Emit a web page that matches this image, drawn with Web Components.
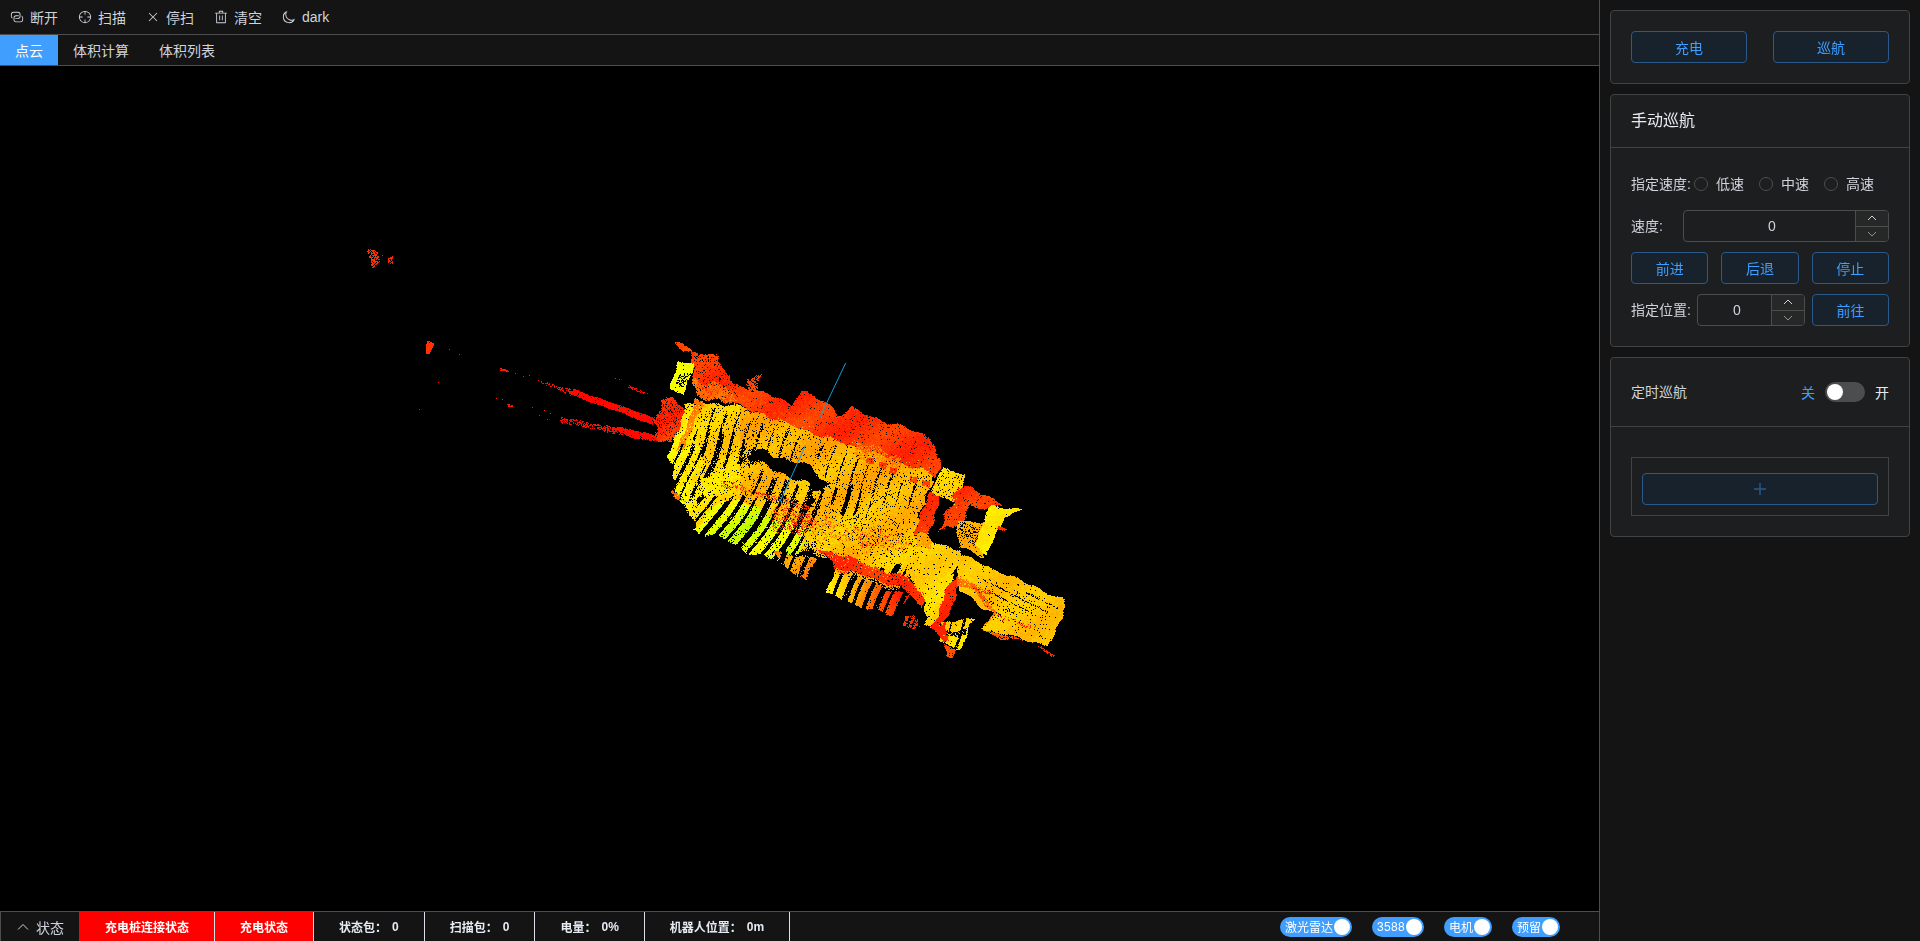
<!DOCTYPE html>
<html lang="zh">
<head>
<meta charset="utf-8">
<title>点云</title>
<style>
    html, body {
        margin: 0;
        height: 100%;
        background: #141414;
        overflow: hidden;
        font-family: "Liberation Sans", "Noto Sans CJK SC", sans-serif;
        font-size: 14px;
        color: #cfd3dc;
    }
</style>
</head>
<body>
<app-shell>
    <tool-bar slot="toolbar">
        <tool-item icon="connection">断开</tool-item>
        <tool-item icon="aim">扫描</tool-item>
        <tool-item icon="close">停扫</tool-item>
        <tool-item icon="delete">清空</tool-item>
        <tool-item icon="moon">dark</tool-item>
    </tool-bar>
    <tab-bar slot="tabs">
        <tab-item active>点云</tab-item>
        <tab-item>体积计算</tab-item>
        <tab-item>体积列表</tab-item>
    </tab-bar>
    <point-cloud slot="view"></point-cloud>
    <status-bar slot="status">
        <status-toggle>状态</status-toggle>
        <status-cell alert>充电桩连接状态</status-cell>
        <status-cell alert>充电状态</status-cell>
        <status-cell value="0">状态包：</status-cell>
        <status-cell value="0">扫描包：</status-cell>
        <status-cell value="0%">电量：</status-cell>
        <status-cell value="0m">机器人位置：</status-cell>
        <inline-switch slot="right">激光雷达</inline-switch>
        <inline-switch slot="right" style="letter-spacing:.3px">3588</inline-switch>
        <inline-switch slot="right">电机</inline-switch>
        <inline-switch slot="right">预留</inline-switch>
    </status-bar>

    <panel-card slot="side">
        <div style="display:flex;justify-content:space-between">
            <plain-button style="width:116px">充电</plain-button>
            <plain-button style="width:116px">巡航</plain-button>
        </div>
    </panel-card>

    <panel-card slot="side">
        <span slot="header" style="font-size:16px;line-height:16px;color:#e5eaf3">手动巡航</span>
        <div style="display:flex;flex-direction:column;gap:10px">
            <form-row>
                <span style="width:63px;margin-bottom:2px">指定速度:</span>
                <radio-item>低速</radio-item>
                <radio-item>中速</radio-item>
                <radio-item>高速</radio-item>
            </form-row>
            <form-row>
                <span style="width:52px;margin-bottom:2px">速度:</span>
                <number-input style="flex:1"></number-input>
            </form-row>
            <div style="display:grid;grid-template-columns:repeat(3,1fr);gap:13px">
                <plain-button>前进</plain-button>
                <plain-button>后退</plain-button>
                <plain-button>停止</plain-button>
            </div>
            <form-row>
                <span style="width:66px;margin-bottom:2px">指定位置:</span>
                <number-input style="flex:1"></number-input>
                <plain-button style="width:77px;margin-left:7px">前往</plain-button>
            </form-row>
        </div>
    </panel-card>

    <panel-card slot="side">
        <div slot="header" style="display:flex;align-items:center;justify-content:space-between;height:32px;flex:1">
            <span style="margin-bottom:2px">定时巡航</span>
            <off-switch></off-switch>
        </div>
        <add-box></add-box>
    </panel-card>
</app-shell>

<script>
const ICONS = {
    connection: "M640 384v64H448a128 128 0 0 0-128 128v128a128 128 0 0 0 128 128h320a128 128 0 0 0 128-128V576a128 128 0 0 0-64-110.848V394.88c74.56 26.368 128 97.472 128 181.056v128a192 192 0 0 1-192 192H448a192 192 0 0 1-192-192V576a192 192 0 0 1 192-192h192z M384 640v-64h192a128 128 0 0 0 128-128V320a128 128 0 0 0-128-128H256a128 128 0 0 0-128 128v128a128 128 0 0 0 64 110.848v70.272A192.064 192.064 0 0 1 64 448V320a192 192 0 0 1 192-192h320a192 192 0 0 1 192 192v128a192 192 0 0 1-192 192H384z",
    aim: "M512 896a384 384 0 1 0 0-768 384 384 0 0 0 0 768zm0 64a448 448 0 1 1 0-896 448 448 0 0 1 0 896z M512 96a32 32 0 0 1 32 32v192a32 32 0 0 1-64 0V128a32 32 0 0 1 32-32zm0 576a32 32 0 0 1 32 32v192a32 32 0 1 1-64 0V704a32 32 0 0 1 32-32zM96 512a32 32 0 0 1 32-32h192a32 32 0 0 1 0 64H128a32 32 0 0 1-32-32zm576 0a32 32 0 0 1 32-32h192a32 32 0 1 1 0 64H704a32 32 0 0 1-32-32z",
    close: "M764.288 214.592 512 466.88 259.712 214.592a31.936 31.936 0 0 0-45.12 45.12L466.752 512 214.528 764.224a31.936 31.936 0 1 0 45.12 45.184L512 557.184l252.288 252.288a31.936 31.936 0 0 0 45.12-45.12L557.12 512.064l252.288-252.352a31.936 31.936 0 1 0-45.12-45.184z",
    delete: "M160 256H96a32 32 0 0 1 0-64h256V95.936a32 32 0 0 1 32-32h256a32 32 0 0 1 32 32V192h256a32 32 0 1 1 0 64h-64v672a32 32 0 0 1-32 32H192a32 32 0 0 1-32-32V256zm448-64v-64H416v64h192zM224 896h576V256H224v640zm192-128a32 32 0 0 1-32-32V416a32 32 0 0 1 64 0v320a32 32 0 0 1-32 32zm192 0a32 32 0 0 1-32-32V416a32 32 0 0 1 64 0v320a32 32 0 0 1-32 32z",
    moon: "M240.448 240.448a384 384 0 1 0 559.424 525.696 448 448 0 0 1-542.016-542.08 390.592 390.592 0 0 0-17.408 16.384zm181.056 362.048a384 384 0 0 0 525.632 16.384A448 448 0 1 1 405.056 76.8a384 384 0 0 0 16.448 525.696z",
};

class AppShell extends HTMLElement {
    constructor() {
        super();
        this.attachShadow({ mode: "open" });
    }
    connectedCallback() {
        this.shadowRoot.innerHTML = `
        <style>
            :host { display: flex; width: 100%; height: 100vh; }
            .main { flex: 1; min-width: 0; display: flex; flex-direction: column; border-right: 1px solid #4c4d4f; }
            .view { flex: 1; min-height: 0; display: flex; background: #000; }
            .side { width: 320px; box-sizing: border-box; padding: 10px; display: flex; flex-direction: column; gap: 10px; background: #141414; }
        </style>
        <div class="main">
            <slot name="toolbar"></slot>
            <slot name="tabs"></slot>
            <div class="view"><slot name="view"></slot></div>
            <slot name="status"></slot>
        </div>
        <div class="side"><slot name="side"></slot></div>
    `;
    }
}

class ToolBar extends HTMLElement {
    constructor() {
        super();
        this.attachShadow({ mode: "open" });
    }
    connectedCallback() {
        this.shadowRoot.innerHTML = `
        <style>
            :host { display: flex; align-items: center; gap: 20px; height: 34px; padding-left: 10px; background: #141414; border-bottom: 1px solid #4c4d4f; }
        </style>
        <slot></slot>
    `;
    }
}

class ToolItem extends HTMLElement {
    constructor() {
        super();
        this.attachShadow({ mode: "open" });
    }
    connectedCallback() {
        const d = ICONS[this.getAttribute("icon")];
        this.shadowRoot.innerHTML = `
        <style>
            :host { display: flex; align-items: center; gap: 6px; color: #cfd3dc; font-size: 14px; }
            svg { width: 14px; height: 14px; fill: currentColor; }
        </style>
        <svg viewBox="0 0 1024 1024"><path d="${d}"/></svg>
        <slot></slot>
    `;
    }
}

class TabBar extends HTMLElement {
    constructor() {
        super();
        this.attachShadow({ mode: "open" });
    }
    connectedCallback() {
        this.shadowRoot.innerHTML = `
        <style>
            :host { display: flex; height: 30px; background: #141414; border-bottom: 1px solid #4c4d4f; }
        </style>
        <slot></slot>
    `;
    }
}

class TabItem extends HTMLElement {
    constructor() {
        super();
        this.attachShadow({ mode: "open" });
    }
    connectedCallback() {
        this.shadowRoot.innerHTML = `
        <style>
            :host { display: flex; align-items: center; padding: 0 15px; color: #cfd3dc; }
            :host([active]) { background: #409eff; color: #fff; }
        </style>
        <slot></slot>
    `;
    }
}

// the scan is generated: polygons in crop coordinates, filled with seeded points
class PointCloud extends HTMLElement {
    constructor() {
        super();
        this.attachShadow({ mode: "open" });
        this._seed = 12345;
    }
    connectedCallback() {
        this.shadowRoot.innerHTML = `
        <style>
            :host { display: block; flex: 1; background: #000; }
            canvas { display: block; }
        </style>
        <canvas width="1599" height="845"></canvas>
    `;
        this._paint(this.shadowRoot.querySelector("canvas"));
    }
    _rand() {
        this._seed = (this._seed * 1664525 + 1013904223) % 4294967296;
        return this._seed / 4294967296;
    }
    _paint(canvas) {
        const W = canvas.width, H = canvas.height, OFFSET_Y = 66;
        const ctx = canvas.getContext("2d");
        const img = ctx.createImageData(W, H);
        const px = img.data;
        for (let i = 3; i < px.length; i += 4) px[i] = 255;

        const set = (x, y, r, g, b) => {
            if (x < 0 || y < 0 || x >= W || y >= H) return;
            const i = (y * W + x) * 4;
            px[i] = r; px[i + 1] = g; px[i + 2] = b;
        };
        const hue = h => {
            h = Math.max(0, Math.min(120, h));
            return h <= 60 ? [255, Math.round(h / 60 * 255), 0] : [Math.round((120 - h) / 60 * 255), 255, 0];
        };
        const inside = (poly, x, y) => {
            let hit = false;
            for (let i = 0, j = poly.length - 1; i < poly.length; j = i++) {
                const [xi, yi] = poly[i], [xj, yj] = poly[j];
                if ((yi > y) !== (yj > y) && x < (xj - xi) * (y - yi) / (yj - yi) + xi) hit = !hit;
            }
            return hit;
        };
        // walks the real pixels of a polygon given in 3x crop coordinates
        // the edge wobbles a little so that the shapes do not look cut out
        const walk = (poly, fn, rough = 0) => {
            const xs = poly.map(p => 640 + p[0] / 3), ys = poly.map(p => 320 + p[1] / 3);
            const x0 = Math.floor(Math.min(...xs)) - 4, x1 = Math.ceil(Math.max(...xs)) + 4;
            const y0 = Math.floor(Math.min(...ys)) - 4, y1 = Math.ceil(Math.max(...ys)) + 4;
            for (let y = y0; y <= y1; y++) {
                for (let x = x0; x <= x1; x++) {
                    const zx = (x - 640) * 3, zy = (y - 320) * 3;
                    const dx = rough * (Math.sin(zy / 9) + Math.sin(zy / 23 + zx / 31)) + (this._rand() - 0.5) * rough;
                    const dy = rough * (Math.sin(zx / 11) + Math.sin(zx / 19 - zy / 37)) + (this._rand() - 0.5) * rough;
                    if (inside(poly, zx + dx, zy + dy)) fn(x, y - OFFSET_Y, zx, zy);
                }
            }
        };
        const fill = (poly, h, density = 0.95, spread = 5, rough = 5) => {
            walk(poly, (x, y, zx, zy) => {
                if (this._rand() > density) return;
                const base = typeof h === "function" ? h(zx, zy) : h;
                const wave = Math.sin(zx / 47 + zy / 31) * spread * 0.5;
                set(x, y, ...hue(base + wave + (this._rand() - 0.5) * spread));
            }, rough);
        };
        const carve = (poly, period, width, prob, nx = 0.94, ny = 0.35) => {
            walk(poly, (x, y, zx, zy) => {
                const along = zx * ny - zy * nx;
                const d = (zx * nx + zy * ny + Math.sin(along / 40) * 5) / period;
                const w = width * (0.8 + 0.3 * Math.sin(Math.floor(d) * 2.3));
                if (d - Math.floor(d) < w && this._rand() < prob) set(x, y, 0, 0, 0);
            }, 6);
        };
        const speckle = (poly, prob, rough = 3) => {
            walk(poly, (x, y) => {
                if (this._rand() < prob) set(x, y, 0, 0, 0);
            }, rough);
        };
        const seven = list => list.map(p => [p[0] - 900, p[1] - 270]);

        // far returns, top left
        fill(seven([[85, 58], [110, 62], [115, 95], [95, 117], [85, 80]]), 9, 0.65, 4, 2);
        fill(seven([[138, 85], [155, 78], [158, 102], [140, 100]]), 9, 0.55, 4, 2);
        fill(seven([[262, 330], [285, 340], [265, 372], [255, 370]]), 10, 0.95, 4, 1);
        fill(seven([[478, 412], [500, 418], [505, 424], [480, 421]]), 5, 0.9, 2, 0);
        fill(seven([[498, 520], [515, 523], [520, 530], [503, 528]]), 5, 0.9, 2, 0);
        fill(seven([[590, 445], [700, 478], [692, 497], [600, 455]]), 3, 0.4, 2, 1);
        fill(seven([[700, 476], [942, 562], [938, 583], [690, 492]]), 2, 0.97, 2, 1);
        fill(seven([[660, 558], [800, 588], [935, 612], [935, 632], [790, 603], [660, 576]]), 3, 0.5, 2, 1);
        fill(seven([[790, 582], [935, 610], [960, 632], [880, 625]]), 3, 0.85, 2, 1);
        fill(seven([[860, 460], [930, 493], [925, 499], [855, 466]]), 2, 0.35, 2, 1);
        [[125, 75], [327, 358], [358, 373], [295, 457], [238, 538], [468, 505], [485, 508], [525, 428], [550, 437], [568, 434], [577, 532], [598, 556], [612, 540], [622, 566], [630, 548], [825, 445], [838, 448]]
            .forEach(p => set(340 + Math.round(p[0] / 3), 230 + Math.round(p[1] / 3) - OFFSET_Y, 255, 24, 0));

        // main floor
        const body = [[170, 240], [300, 260], [600, 350], [885, 440], [850, 560], [820, 650], [880, 690], [800, 770], [790, 800], [560, 700], [400, 620], [170, 620], [100, 500], [130, 400]];
        fill(body, (x, y) => 42 + (y - x * 0.3 - 250) * 0.02 + (x < 300 ? 6 : 0), 0.96, 8);
        // lower left, almost green
        fill([[165, 625], [245, 530], [340, 560], [520, 640], [490, 690], [400, 725], [300, 680]], 68, 0.92, 12);
        carve([[160, 530], [530, 530], [530, 730], [160, 730]], 36, 0.42, 0.96, 0.83, 0.55);
        fill([[500, 620], [800, 770], [760, 780], [480, 690]], 44, 0.7, 12);

        // stripes across the hall
        carve([[170, 330], [320, 340], [310, 425], [170, 475]], 38, 0.42, 0.88);
        carve([[190, 250], [500, 350], [470, 425], [320, 395], [170, 330]], 38, 0.2, 0.66);
        carve([[520, 360], [830, 470], [800, 570], [560, 475]], 38, 0.16, 0.66);
        carve([[330, 450], [560, 510], [540, 595], [330, 515]], 38, 0.4, 0.85);
        carve([[560, 490], [700, 520], [680, 595], [560, 560]], 38, 0.34, 0.92);
        carve([[600, 560], [820, 620], [790, 700], [590, 660]], 14, 0.2, 0.2);
        speckle([[320, 400], [370, 392], [480, 428], [572, 490], [530, 517], [470, 472], [400, 448], [340, 428]], 1, 6);
        walk([[300, 390], [340, 385], [345, 440], [300, 420]], (x, y) => {
            if (this._rand() < 0.45) set(x, y, 0, 0, 0);
        }, 4);

        // top wall
        fill([[150, 95], [230, 110], [280, 190], [460, 250], [480, 215], [555, 240], [590, 285], [630, 265], [870, 350], [902, 410], [885, 470], [820, 440], [600, 365], [480, 325], [300, 255], [200, 225], [155, 170]], 12, 0.97, 8, 4);
        fill([[320, 170], [365, 175], [350, 220], [325, 215]], 14, 0.75, 6, 6);
        fill([[100, 60], [128, 58], [160, 95], [130, 88]], 20, 0.95, 8, 3);
        fill([[160, 170], [240, 195], [300, 250], [170, 225]], 28, 0.85, 10, 6);
        fill([[640, 360], [780, 410], [770, 520], [780, 450], [640, 400]], 30, 0.5, 6, 5);
        [[680, 410], [715, 425], [748, 440], [810, 465], [845, 480]].forEach(c => {
            fill([[c[0], c[1]], [c[0] + 22, c[1] + 4], [c[0] + 20, c[1] + 22], [c[0] - 2, c[1] + 16]], 14, 0.95, 5, 1);
        });
        fill([[262, 200], [520, 300], [505, 330], [250, 240]], 16, 0.55, 8, 6);
        speckle([[150, 95], [300, 130], [290, 230], [170, 190]], 0.08);
        speckle([[640, 270], [880, 360], [880, 420], [640, 340]], 0.025);

        // left end
        fill([[115, 122], [162, 130], [130, 222], [85, 205]], 60, 0.97, 6, 2);
        speckle([[115, 160], [150, 160], [130, 200], [105, 195]], 0.5);
        fill([[70, 235], [115, 228], [130, 265], [95, 378], [60, 360], [40, 340]], 12, 0.93, 10, 6);
        speckle([[70, 240], [125, 250], [95, 340], [50, 320]], 0.12);
        fill([[135, 250], [172, 262], [115, 440], [85, 410]], 55, 0.97, 6, 3);
        fill([[165, 240], [190, 240], [125, 400], [105, 400]], 30, 0.9, 8, 3);
        fill([[90, 400], [170, 370], [190, 420], [130, 545], [100, 500]], 58, 0.92, 8, 5);
        carve([[90, 370], [190, 370], [190, 545], [90, 545]], 30, 0.35, 0.85);
        fill([[90, 510], [120, 512], [135, 540], [105, 530]], 24, 0.8, 6, 3);

        // red seams in the middle
        fill([[240, 480], [510, 555], [505, 570], [235, 495]], 14, 0.4, 8, 3);
        fill([[400, 545], [520, 580], [500, 650], [390, 620]], 18, 0.4, 14, 8);
        fill([[500, 590], [800, 640], [790, 700], [520, 650]], 22, 0.22, 14, 8);

        // lower stripes
        fill([[555, 820], [592, 745], [800, 825], [790, 850], [750, 885], [640, 850]], (x) => 58 - (x - 555) * 0.22, 0.97, 5, 3);
        carve([[550, 740], [810, 740], [810, 890], [550, 890]], 32, 0.5, 0.97, 0.9, 0.42);
        fill([[400, 690], [525, 715], [495, 780], [420, 730]], 32, 0.92, 14, 3);
        carve([[395, 690], [530, 690], [530, 785], [395, 785]], 34, 0.42, 0.95, 0.9, 0.42);
        fill([[530, 680], [800, 772], [860, 830], [850, 868], [780, 800], [590, 745]], 11, 0.92, 6, 4);
        fill([[590, 740], [780, 800], [775, 812], [585, 750]], 40, 0.55, 8, 2);
        fill([[795, 885], [820, 880], [840, 925], [790, 915]], 10, 0.75, 4, 3);
        carve([[790, 880], [845, 880], [845, 930], [790, 930]], 16, 0.4, 0.9, 0.9, 0.42);

        // middle right block
        fill([[805, 770], [870, 660], [962, 690], [930, 800], [870, 922], [850, 920], [860, 850]], 50, 0.97, 7, 4);
        fill([[850, 600], [880, 690], [825, 680], [820, 650]], 34, 0.9, 8, 4);
        fill([[880, 490], [908, 512], [860, 642], [820, 642]], 12, 0.97, 5, 3);
        fill([[905, 440], [978, 465], [945, 560], [870, 510]], 52, 0.97, 6, 2);
        speckle([[905, 440], [978, 465], [945, 560], [870, 510]], 0.1);
        fill([[930, 790], [972, 740], [960, 780], [925, 880], [885, 930], [870, 920]], 9, 0.97, 5, 3);

        // right wing
        fill([[955, 495], [1085, 545], [1040, 572], [985, 585], [950, 625], [895, 625]], 12, 0.95, 8, 5);
        fill([[950, 600], [1045, 605], [1030, 712], [955, 680]], 42, 0.95, 6, 3);
        speckle([[950, 600], [1020, 620], [1000, 680], [935, 640]], 0.3);
        fill([[1052, 555], [1145, 568], [1090, 590], [1040, 702], [1000, 670]], 56, 0.98, 5, 2);
        speckle([[985, 555], [1040, 570], [1020, 597], [975, 582]], 1, 2);
        speckle([[915, 535], [940, 545], [925, 560], [905, 550]], 1, 2);
        fill([[1075, 615], [1100, 628], [1090, 632], [1070, 625]], 12, 0.9, 4, 0);

        // annex
        fill([[950, 700], [1020, 728], [1272, 838], [1275, 860], [1225, 975], [1020, 925], [1060, 880], [960, 810]], 46, 0.98, 6, 3);
        fill([[950, 760], [1010, 800], [1070, 880], [1015, 925], [1060, 880], [1000, 810], [950, 790]], 24, 0.8, 8, 3);
        fill([[1020, 925], [1150, 960], [1080, 955]], 22, 0.85, 8, 2);
        speckle([[1000, 760], [1260, 850], [1220, 960], [1040, 900]], 0.04);
        walk([[1020, 770], [1260, 850], [1255, 870], [1070, 890]], (x, y, zx, zy) => {
            const d = (zx * 0.45 - zy * 0.9) / 24;
            if (d - Math.floor(d) < 0.18 && this._rand() < 0.45) set(x, y, 0, 0, 0);
        }, 3);
        fill([[1000, 790], [1060, 820], [1050, 830], [995, 800]], 10, 0.5, 4, 2);
        fill([[1065, 880], [1190, 915], [1185, 925], [1065, 895]], 10, 0.28, 4, 2);
        fill([[1190, 975], [1205, 978], [1245, 1008], [1235, 1012]], 8, 0.55, 4, 1);

        // bottom block
        fill([[900, 905], [1003, 895], [960, 985], [900, 965]], 50, 0.97, 8, 3);
        carve([[900, 895], [1005, 895], [1005, 985], [900, 985]], 34, 0.22, 0.9);
        speckle([[905, 930], [985, 930], [975, 945], [905, 945]], 0.7);
        fill([[880, 925], [915, 905], [925, 960], [910, 970]], 10, 0.9, 5, 3);
        fill([[915, 975], [945, 985], [930, 1015], [915, 1012]], 16, 0.95, 6, 2);

        // sparse black dots over everything, the scan has them everywhere
        speckle(body, 0.035);

        ctx.putImageData(img, 0, 0);

        ctx.strokeStyle = "#0a9fe6";
        ctx.lineWidth = 1;
        ctx.beginPath();
        ctx.moveTo(845.7, 363 - OFFSET_Y);
        ctx.lineTo(820, 417 - OFFSET_Y);
        ctx.moveTo(805.7, 445 - OFFSET_Y);
        ctx.lineTo(780, 501.7 - OFFSET_Y);
        ctx.stroke();
    }
}

class StatusBar extends HTMLElement {
    constructor() {
        super();
        this.attachShadow({ mode: "open" });
    }
    connectedCallback() {
        this.shadowRoot.innerHTML = `
        <style>
            :host { display: flex; height: 30px; box-sizing: border-box; background: #141414; border-top: 1px solid #4c4d4f; }
            .right { margin-left: auto; display: flex; align-items: center; gap: 20px; padding-right: 39px; }
        </style>
        <slot></slot>
        <div class="right"><slot name="right"></slot></div>
    `;
    }
}

class StatusToggle extends HTMLElement {
    constructor() {
        super();
        this.attachShadow({ mode: "open" });
    }
    connectedCallback() {
        this.shadowRoot.innerHTML = `
        <style>
            :host { display: flex; align-items: center; gap: 7px; box-sizing: border-box; width: 80px; padding-left: 16px; border-left: 1px solid #4c4d4f; border-right: 1px solid #4c4d4f; color: #cfd3dc; font-size: 14px; }
            svg { width: 12px; height: 12px; }
        </style>
        <svg viewBox="0 0 12 12" fill="none" stroke="currentColor"><path d="M1 8.5 6 3.5 11 8.5"/></svg>
        <slot></slot>
    `;
    }
}

class StatusCell extends HTMLElement {
    constructor() {
        super();
        this.attachShadow({ mode: "open" });
    }
    connectedCallback() {
        const value = this.getAttribute("value");
        this.shadowRoot.innerHTML = `
        <style>
            :host { display: flex; align-items: center; padding: 0 25px; border-right: 1px solid #dcdfe6; color: #e5eaf3; font-size: 12px; font-weight: 600; }
            :host([alert]) { background: #ff0000; color: #fff; }
            .value { margin-left: 5px; }
        </style>
        <slot></slot>
        ${value === null ? "" : `<span class="value">${value}</span>`}
    `;
    }
}

class InlineSwitch extends HTMLElement {
    constructor() {
        super();
        this.attachShadow({ mode: "open" });
    }
    connectedCallback() {
        this.shadowRoot.innerHTML = `
        <style>
            :host { display: flex; align-items: center; height: 20px; padding: 0 2px 0 5px; gap: 1px; border-radius: 10px; background: #409eff; color: #fff; font-size: 12px; }
            i { width: 16px; height: 16px; border-radius: 50%; background: #fff; }
        </style>
        <slot></slot><i></i>
    `;
    }
}

class PanelCard extends HTMLElement {
    constructor() {
        super();
        this.attachShadow({ mode: "open" });
    }
    connectedCallback() {
        this.shadowRoot.innerHTML = `
        <style>
            :host { display: block; background: #1d1e1f; border: 1px solid #414243; border-radius: 4px; color: #cfd3dc; }
            .header { display: none; align-items: center; padding: 18px 20px; border-bottom: 1px solid #414243; }
            .header.on { display: flex; }
            .body { padding: 20px; }
        </style>
        <div class="header"><slot name="header"></slot></div>
        <div class="body"><slot></slot></div>
    `;
        if (this.querySelector("[slot=header]")) {
            this.shadowRoot.querySelector(".header").classList.add("on");
        }
    }
}

class PlainButton extends HTMLElement {
    constructor() {
        super();
        this.attachShadow({ mode: "open" });
    }
    connectedCallback() {
        this.shadowRoot.innerHTML = `
        <style>
            :host { display: flex; align-items: center; justify-content: center; box-sizing: border-box; height: 32px; background: #18222c; border: 1px solid #2a598a; border-radius: 4px; color: #409eff; font-size: 14px; }
        </style>
        <slot></slot>
    `;
    }
}

class FormRow extends HTMLElement {
    constructor() {
        super();
        this.attachShadow({ mode: "open" });
    }
    connectedCallback() {
        this.shadowRoot.innerHTML = `
        <style>
            :host { display: flex; align-items: center; height: 32px; color: #cfd3dc; }
        </style>
        <slot></slot>
    `;
    }
}

class RadioItem extends HTMLElement {
    constructor() {
        super();
        this.attachShadow({ mode: "open" });
    }
    connectedCallback() {
        this.shadowRoot.innerHTML = `
        <style>
            :host { display: flex; align-items: center; gap: 8px; margin-right: 15px; color: #cfd3dc; }
            i { box-sizing: border-box; width: 14px; height: 14px; border: 1px solid #4c4d4f; border-radius: 50%; }
            span { margin-bottom: 2px; }
        </style>
        <i></i><span><slot></slot></span>
    `;
    }
}

class NumberInput extends HTMLElement {
    constructor() {
        super();
        this.attachShadow({ mode: "open" });
    }
    connectedCallback() {
        this.shadowRoot.innerHTML = `
        <style>
            :host { display: flex; box-sizing: border-box; height: 32px; border: 1px solid #4c4d4f; border-radius: 4px; color: #cfd3dc; overflow: hidden; }
            .value { flex: 1; display: flex; align-items: center; justify-content: center; padding-left: 14px; padding-right: 9px; }
            .steps { width: 32px; display: flex; flex-direction: column; border-left: 1px solid #4c4d4f; background: #262727; }
            .steps div { flex: 1; display: flex; align-items: center; justify-content: center; }
            .steps div + div { border-top: 1px solid #4c4d4f; color: #8d9095; }
            svg { width: 10px; height: 10px; }
        </style>
        <div class="value">0</div>
        <div class="steps">
            <div><svg viewBox="0 0 10 10" fill="none" stroke="currentColor"><path d="M1 7 5 3 9 7"/></svg></div>
            <div><svg viewBox="0 0 10 10" fill="none" stroke="currentColor"><path d="M1 3 5 7 9 3"/></svg></div>
        </div>
    `;
    }
}

class OffSwitch extends HTMLElement {
    constructor() {
        super();
        this.attachShadow({ mode: "open" });
    }
    connectedCallback() {
        this.shadowRoot.innerHTML = `
        <style>
            :host { display: flex; align-items: center; gap: 10px; }
            .off { color: #409eff; }
            .on { color: #e5eaf3; }
            .track { display: flex; align-items: center; box-sizing: border-box; width: 40px; height: 20px; padding: 0 2px; border-radius: 10px; background: #4c4d4f; }
            .track i { width: 16px; height: 16px; border-radius: 50%; background: #fff; }
        </style>
        <span class="off">关</span>
        <div class="track"><i></i></div>
        <span class="on">开</span>
    `;
    }
}

class AddBox extends HTMLElement {
    constructor() {
        super();
        this.attachShadow({ mode: "open" });
    }
    connectedCallback() {
        this.shadowRoot.innerHTML = `
        <style>
            :host { display: block; margin-top: 10px; padding: 15px 10px 10px; border: 1px solid #414243; }
            .add { display: flex; align-items: center; justify-content: center; box-sizing: border-box; height: 32px; background: #18222c; border: 1px solid #2a598a; border-radius: 4px; color: #2a598a; }
            svg { width: 12px; height: 12px; }
        </style>
        <div class="add">
            <svg viewBox="0 0 12 12" stroke="currentColor" stroke-width="1.4"><path d="M6 0V12M0 6H12"/></svg>
        </div>
    `;
    }
}

customElements.define("app-shell", AppShell);
customElements.define("tool-bar", ToolBar);
customElements.define("tool-item", ToolItem);
customElements.define("tab-bar", TabBar);
customElements.define("tab-item", TabItem);
customElements.define("point-cloud", PointCloud);
customElements.define("status-bar", StatusBar);
customElements.define("status-toggle", StatusToggle);
customElements.define("status-cell", StatusCell);
customElements.define("inline-switch", InlineSwitch);
customElements.define("panel-card", PanelCard);
customElements.define("plain-button", PlainButton);
customElements.define("form-row", FormRow);
customElements.define("radio-item", RadioItem);
customElements.define("number-input", NumberInput);
customElements.define("off-switch", OffSwitch);
customElements.define("add-box", AddBox);
</script>
</body>
</html>
